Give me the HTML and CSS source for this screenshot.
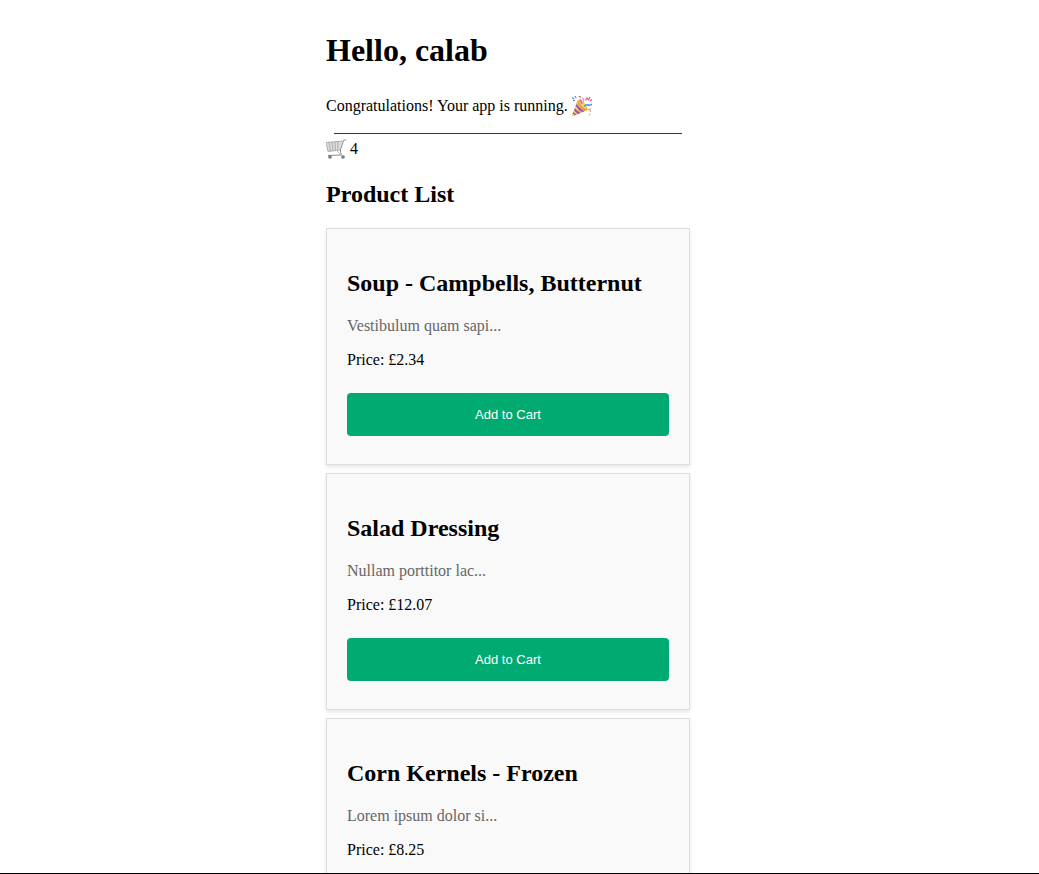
FILE: index.html
```html
<!DOCTYPE html>
<html lang="en">
<head>
<meta charset="utf-8">
<meta name="viewport" content="width=device-width, initial-scale=1">
<title>Product List</title>
<link rel="stylesheet" href="styles.css">
</head>
<body>
<div class="page">
  <main class="content">
    <h1 class="greeting">Hello, calab</h1>
    <p class="intro">
      <span>Congratulations! Your app is running.</span>
      <svg class="icon" viewBox="0 0 20 20" aria-hidden="true">
        <path d="M5.500 4.500 Q12 4 15.500 14 L2 19.800 Q0 20 .3 18.500Z" fill="#eeb238"/>
        <path d="M5.500 4.500 L9 8 L3 19 L1.500 19.700Q0 20 .3 18.500Z" fill="#fbd860"/>
        <path d="M4.800 7.500 Q7 12.500 12.500 15.200 L10.500 16.100 Q6 14 3.900 10.300Z M2.900 12.300 Q5 15.500 8.300 17 L6.300 17.900 Q3.500 16.500 2.100 14.300Z M1.300 16 L4.500 18.700 L3.200 19.200 L.8 17.500Z" fill="#984cc8"/>
        <ellipse cx="10.500" cy="9.500" rx="6.400" ry="2.800" transform="rotate(45 10.500 9.500)" fill="#e3a034"/>
        <ellipse cx="11" cy="9" rx="5" ry="1.600" transform="rotate(45 11 9)" fill="#fbd46a"/>
        <path d="M9.500 8 Q10 5 7.500 3.500" fill="none" stroke="#ec6a80" stroke-width="1.600"/>
        <path d="M10.500 7 Q12.500 4.500 10.500 2" fill="none" stroke="#f3a0ae" stroke-width="1.400"/>
        <path d="M12 10.500 Q14 8 16 9 T20 8" fill="none" stroke="#4b96e4" stroke-width="1.600"/>
        <path d="M0 1.500 L2 3 M1 5 L3 4 M3 0 L4 2" stroke="#5c8ddd" stroke-width="1.300"/>
        <path d="M13.500 4.500 L15 2 L16.500 4 L18 1 M18 5 L20 3.500 M7 0 L9 1.500" fill="none" stroke="#df5284" stroke-width="1.100"/>
        <path d="M16 14 L18 13 L18.500 16 M17 18 L18 19" fill="none" stroke="#dfa68e" stroke-width="1.300"/>
      </svg>
    </p>
    <hr class="divider">
    <div class="cart">
      <svg class="icon" viewBox="0 0 20 20" role="img" aria-label="Cart">
        <path d="M0 3.500 L16.500 2 L14.500 11 L2 12.500Z" fill="#dedede"/>
        <path d="M0 3.500 L16.500 2 M2 12.500 L14.500 11 M0 3.500 L2 12.500 M3 3.300 L4.500 12 M6 3 L7 12 M9 3 L9.500 11.500 M12 2.500 L11.800 11" fill="none" stroke="#a0a0a0" stroke-width=".8"/>
        <path d="M20 .6 L17.500 1.500 L14.500 11 Q14 13 15.500 16 L2 16.500" fill="none" stroke="#8d8d8d" stroke-width="1"/>
        <path d="M11 12 L14.500 15.500" stroke="#c0c0c0" stroke-width="1"/>
        <circle cx="4" cy="18" r="1.800" fill="#716969"/><circle cx="17" cy="18" r="1.800" fill="#716969"/>
        <circle cx="4" cy="18" r=".6" fill="#ccc"/><circle cx="17" cy="18" r=".6" fill="#ccc"/>
      </svg>
      <span>4</span>
    </div>
    <h2 class="heading">Product List</h2>
    <div class="products">
      <article class="card">
        <h2 class="heading">Soup - Campbells, Butternut</h2>
        <p class="description">Vestibulum quam sapi...</p>
        <p class="price">Price: £2.34</p>
        <button class="add" type="button">Add to Cart</button>
      </article>
      <article class="card">
        <h2 class="heading">Salad Dressing</h2>
        <p class="description">Nullam porttitor lac...</p>
        <p class="price">Price: £12.07</p>
        <button class="add" type="button">Add to Cart</button>
      </article>
      <article class="card">
        <h2 class="heading">Corn Kernels - Frozen</h2>
        <p class="description">Lorem ipsum dolor si...</p>
        <p class="price">Price: £8.25</p>
      </article>
    </div>
  </main>
</div>
</body>
</html>
```
FILE: styles.css
```css
* {
  box-sizing: border-box;
}

body {
  margin: 0;
  font: 16px/18px "Liberation Serif", "Times New Roman", serif;
  color: #000;
  background: #fff;
}

.page {
  height: 100vh;
  padding: 32px 31px 0 8px;
  overflow: auto;
  scrollbar-width: none;
  border-bottom: 1px solid #000;
}

.content {
  max-width: 364px;
  margin: 0 auto;
}

.greeting {
  margin: 0 0 24px;
  font-size: 32px;
  line-height: 37px;
}

.intro,
.cart {
  display: flex;
  align-items: center;
  gap: 4px;
  margin: 0;
  line-height: 25px;
}

.icon {
  width: 20px;
  height: 20px;
  flex: none;
}

.divider {
  height: 1px;
  margin: 15px 8px 2px;
  border: 0;
  background: #800080;
}

.heading {
  margin: 20px 0;
  font-size: 24px;
  line-height: 27px;
}

.products {
  display: grid;
  gap: 8px;
}

.card {
  padding: 21px 20px 20px;
  background: #f9f9f9;
  border: 1px solid #ddd;
  box-shadow: 0 2px 4px rgba(0, 0, 0, 0.1);
}

.description,
.price {
  margin: 0 0 16px;
}

.description {
  color: #666;
}

.add {
  display: block;
  width: 100%;
  margin: 24px 0 8px;
  padding: 14px 20px;
  border: 0;
  border-radius: 4px;
  background: #00aa70;
  color: #fff;
  font: 13px/15px "Liberation Sans", Arial, sans-serif;
  cursor: pointer;
}
```
